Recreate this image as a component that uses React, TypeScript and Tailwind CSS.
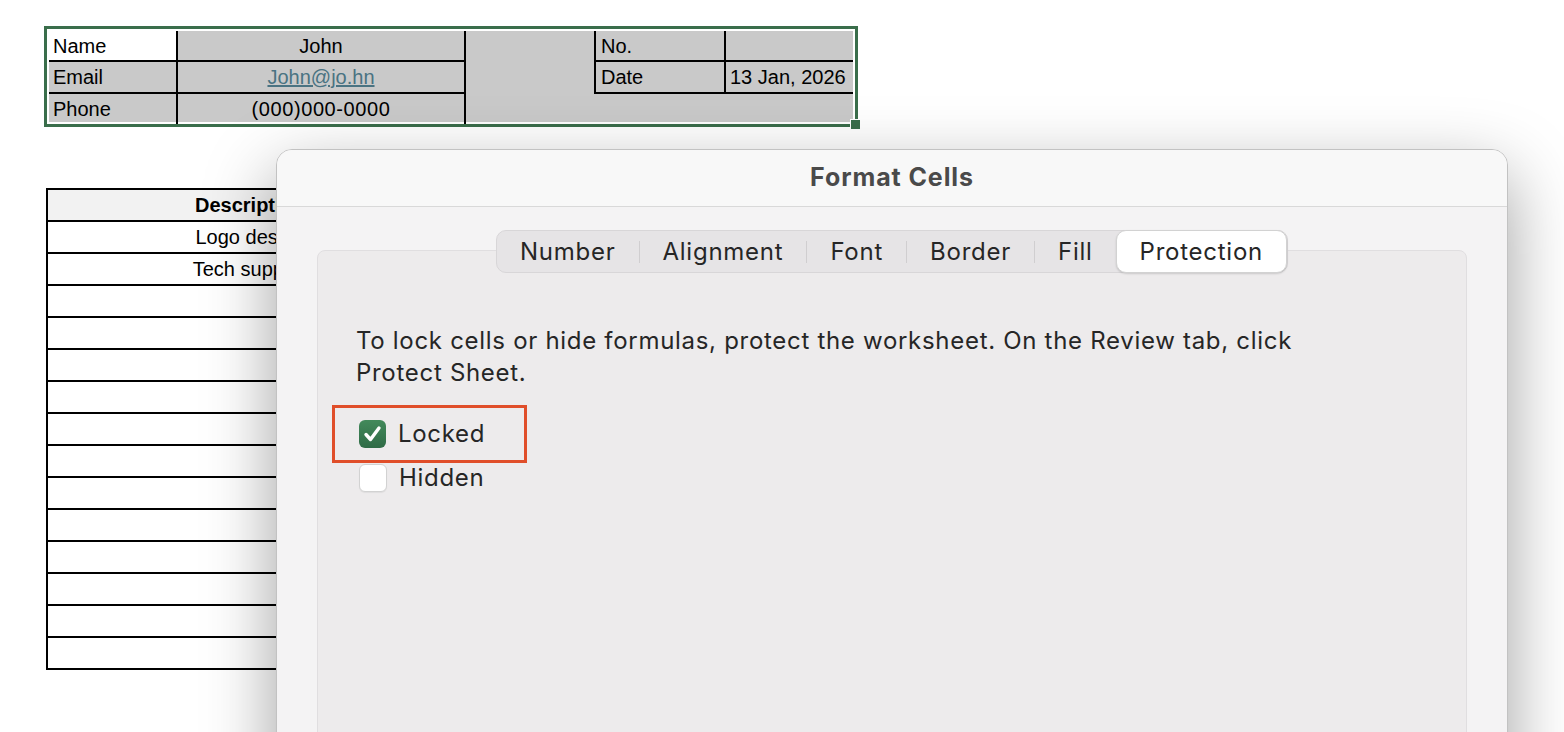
const sheetFont = { fontFamily: '"Liberation Sans", Arial, sans-serif' };
const uiFont = { fontFamily: 'Inter, "Noto Sans", sans-serif' };

const tabs = ['Number', 'Alignment', 'Font', 'Border', 'Fill'];

const HeaderTable = () => (
  <div className="relative w-[814px] border-[3px] border-[#3a6e4b] bg-white p-[2px]">
    <div className="flex h-[91px] bg-[#c9c9c9]">
      <div className="flex w-[417px] flex-col">
        <div className="flex h-[31px] border-b-2 border-black">
          <div className="flex w-[129px] items-center border-r-2 border-black bg-white pl-[4px]">Name</div>
          <div className="flex flex-1 items-center justify-center border-r-2 border-black">John</div>
        </div>
        <div className="flex h-[32px] border-b-2 border-black">
          <div className="flex w-[129px] items-center border-r-2 border-black pl-[4px]">Email</div>
          <div className="flex flex-1 items-center justify-center border-r-2 border-black text-[#4a7382] underline">
            John@jo.hn
          </div>
        </div>
        <div className="flex flex-1">
          <div className="flex w-[129px] items-center border-r-2 border-black pl-[4px]">Phone</div>
          <div className="flex flex-1 items-center justify-center border-r-2 border-black tracking-[0.6px]">
            (000)000-0000
          </div>
        </div>
      </div>
      <div className="w-[128px]" />
      <div className="flex flex-1 flex-col">
        <div className="flex h-[31px] border-b-2 border-l-2 border-black">
          <div className="flex w-[130px] items-center border-r-2 border-black pl-[5px]">No.</div>
          <div className="flex-1" />
        </div>
        <div className="flex h-[32px] border-b-2 border-l-2 border-black">
          <div className="flex w-[130px] items-center border-r-2 border-black pl-[5px]">Date</div>
          <div className="flex flex-1 items-center pl-[4px]">13 Jan, 2026</div>
        </div>
      </div>
    </div>
    <div className="absolute -right-[6px] -bottom-[6px] h-[11px] w-[11px] border border-white bg-[#3a6e4b]" />
  </div>
);

const ItemsTable = () => {
  const rows = ['Logo design', 'Tech support', '', '', '', '', '', '', '', '', '', '', '', ''];
  return (
    <div className="ml-[2px] mt-[61px] w-[408px] border-x-2 border-t-2 border-black">
      <div className="flex h-[32px] items-center justify-center border-b-2 border-black bg-[#f2f2f2] font-bold">
        Description
      </div>
      {rows.map((r, i) => (
        <div key={i} className="flex h-[32px] items-center justify-center border-b-2 border-black">
          {r}
        </div>
      ))}
    </div>
  );
};

const CheckMark = () => (
  <svg width="27" height="28" viewBox="0 0 27 28">
    <path d="M7 14.5 L11.5 19.5 L20 8" fill="none" stroke="white" strokeWidth="3.4" strokeLinecap="round" strokeLinejoin="round" />
  </svg>
);

const FormatCells = () => (
  <div
    className="absolute left-[276px] top-[149px] h-[640px] w-[1232px] overflow-hidden rounded-[16px] border border-[#c2c2c2] bg-[#f4f3f4] shadow-[0_25px_70px_rgba(0,0,0,0.38)]"
    style={uiFont}
  >
    <div className="flex h-[57px] items-center justify-center border-b border-[#d9d9d9] bg-[#f8f8f8] text-[25px] font-bold tracking-[0.9px] text-[#4a4a4a]">
      Format Cells
    </div>
    <div className="flex flex-col items-center px-[40px] pt-[23px]">
      <div className="relative z-10 flex h-[43px] items-center rounded-[10px] border border-[#d8d6d8] bg-[#e6e4e6] text-[24px] tracking-[0.75px] text-[#262626]">
        {tabs.map((t, i) => (
          <div key={t} className="flex items-center">
            {i > 0 && <div className="h-[22px] w-px bg-[#d0ced0]" />}
            <div className="px-[23px]">{t}</div>
          </div>
        ))}
        <div className="-my-px flex h-[43px] items-center rounded-[10px] border border-[#d2d2d2] bg-white px-[23px] shadow-[0_1px_2px_rgba(0,0,0,0.15)]">
          Protection
        </div>
      </div>
      <div className="-mt-[23px] h-[600px] w-full rounded-[8px] border border-[#e0dee0] bg-[#edebec] pl-[38px] pt-[74px] text-[24px] leading-[32px] tracking-[0.7px] text-[#262626]">
        <p>
          To lock cells or hide formulas, protect the worksheet. On the Review tab, click
          <br />
          Protect Sheet.
        </p>
        <div className="-ml-[24px] mt-[16px] flex h-[58px] w-[195px] items-center gap-[12px] border-[3px] border-[#e04e2a] pl-[24px]">
          <div className="h-[28px] w-[27px] rounded-[6px] bg-gradient-to-b from-[#438a5b] to-[#2f6b46]">
            <CheckMark />
          </div>
          <span>Locked</span>
        </div>
        <div className="mt-[1px] flex h-[28px] items-center gap-[12px] pl-[3px]">
          <div className="h-[28px] w-[28px] rounded-[6px] border border-[#d2d2d2] bg-white shadow-[0_1px_1px_rgba(0,0,0,0.06)]" />
          <span>Hidden</span>
        </div>
      </div>
    </div>
  </div>
);

export default function App() {
  return (
    <div className="relative h-[732px] w-[1564px] overflow-hidden bg-white">
      <div className="pl-[44px] pt-[26px] text-[20px] text-black" style={sheetFont}>
        <HeaderTable />
        <ItemsTable />
      </div>
      <FormatCells />
    </div>
  );
}
